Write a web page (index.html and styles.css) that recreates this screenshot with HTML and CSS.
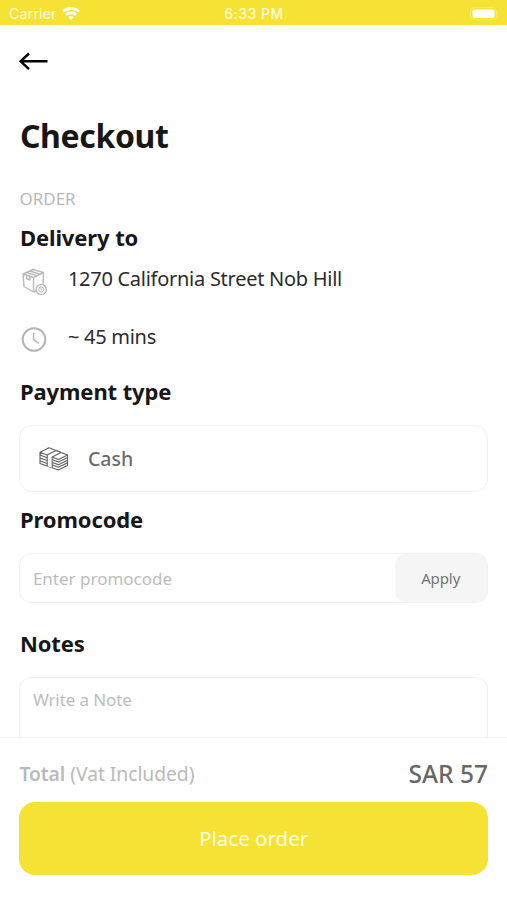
FILE: index.html
```html
<!DOCTYPE html>
<html lang="en">
<head>
<meta charset="utf-8">
<title>Checkout</title>
<link rel="stylesheet" href="styles.css">
</head>
<body>
<div class="screen">
  <div class="status">
    <div class="carrier"><span>Carrier</span>
      <svg class="wifi" width="18" height="14" viewBox="0 0 18 14" fill="none" stroke="#fffef0" stroke-width="2.8"><path d="M1 4.4Q9-2 17 4.4M4 7.9Q9 3.7 14 7.9"/><path d="M6.2 10.1Q9 8.1 11.8 10.1L9 12.9Z" fill="#fffef0" stroke="none"/></svg>
    </div>
    <span class="time">6:33 PM</span>
    <div class="power"><svg width="30" height="14" viewBox="0 0 30 14"><rect x="1.5" y=".5" width="26" height="12" rx="3.5" fill="none" stroke="#f9ea6c"/><rect x="3.5" y="2.4" width="22" height="8.5" rx="1.8" fill="#fff"/><path d="M28.5 5q1.5 1.6 0 3.2z" fill="#f9ea6c"/></svg></div>
  </div>
  <main class="content">
    <svg class="back" width="32" height="20" viewBox="0 0 32 20" fill="none" stroke="#000" stroke-width="2.4"><path d="M29.5 10.3H2M11 2.5L2.6 10.3L11 18.1"/></svg>
    <h1>Checkout</h1>
    <p class="label">ORDER</p>
    <h2 class="delivery">Delivery to</h2>
    <div class="info">
      <svg width="28" height="28" viewBox="0 0 28 28" fill="none" stroke="#bababa" stroke-width="1.4" stroke-linejoin="round"><path d="M3 6L13 1.5L23.5 4.5L13.5 9.5ZM3 6L4 18.5L13.5 24L23 19.5L23.5 4.5M13.5 9.5V24M6.5 4.5L17 7.7M9.7 3L20.2 6.1M6.5 7.5V10.5L10 12V8.5"/><circle cx="21.2" cy="21.5" r="5.1" fill="#fff"/><circle cx="21.2" cy="21.5" r="2.6" stroke-width="1"/><path d="M21.2 20v3" stroke-width="1"/></svg>
      <span class="address">1270 California Street Nob Hill</span>
    </div>
    <div class="info eta">
      <svg width="28" height="28" viewBox="0 0 28 28" fill="none" stroke="#b5b5b5"><circle cx="14" cy="13.5" r="11.3" stroke-width="2"/><path d="M13.6 7V13.5L19 17.5" stroke-width="1.5"/></svg>
      <span>~ 45 mins</span>
    </div>
    <h2 class="payment">Payment type</h2>
    <div class="card">
      <svg width="30" height="26" viewBox="0 0 30 26" fill="none" stroke="#606060" stroke-width="1.1" stroke-linejoin="round"><path d="M1 6.3L10 1.8L28.5 9V19.5L19.5 24L1 17.5ZM1 6.3L8 9M13.5 11.2L19.5 13.5L28.5 9M1 9.1L8 11.8M1 11.9L8 14.6M1 14.7L8 17.4M13.5 13.8L19.5 16.1L28.5 11.6M13.5 16.4L19.5 18.7L28.5 14.2M13.5 19L19.5 21.3L28.5 16.8"/><path d="M8.2 20V9L17 4.5L22 6.5L13.2 11V22" fill="#fff"/></svg>
      <span>Cash</span>
    </div>
    <h2 class="promo">Promocode</h2>
    <div class="field"><span class="hint">Enter promocode</span><div class="apply">Apply</div></div>
    <h2 class="notes">Notes</h2>
    <div class="note">Write a Note</div>
  </main>
  <footer>
    <div class="total"><span class="caption"><b>Total</b> (Vat Included)</span><span class="sum">SAR 57</span></div>
    <div class="place">Place order</div>
  </footer>
</div>
</body>
</html>
```
FILE: styles.css
```css
* { box-sizing: border-box; }
body { margin: 0; background: #fff; font-family: "Noto Sans", sans-serif; color: #171717; }
h1, h2, p { margin: 0; }
svg { display: block; flex: none; }
.screen { width: 507px; height: 900px; display: flex; flex-direction: column; overflow: hidden; }
.status { flex: none; height: 25px; padding: 2px 8px 0 9px; background: #f6e235; color: #fffbd8; display: grid; grid-template-columns: 1fr auto 1fr; align-items: center; font: 14.5px/22px Inter, sans-serif; }
.carrier { display: flex; align-items: center; gap: 5px; }
.time { font-weight: 500; font-size: 14px; letter-spacing: .5px; }
.power { display: flex; justify-content: flex-end; }
.content { flex: 1; min-height: 0; overflow: hidden; padding: 26px 18.6px 0 19.4px; }
.back { margin-left: -1.4px; }
h1 { margin: 43px 0 0 .5px; font-size: 32px; line-height: 44px; font-weight: 700; letter-spacing: -.35px; }
.label { margin-top: 29px; font-size: 17px; line-height: 24px; color: #b9b9b9; }
h2 { padding-left: .5px; font-size: 22px; line-height: 30px; font-weight: 700; letter-spacing: -.1px; }
.delivery { margin-top: 11px; }
.info { display: flex; align-items: center; gap: 20px; height: 30px; margin: 15px 0 0 .5px; font-size: 20px; color: #2b2b2b; }
.info span { line-height: 30px; margin-top: -6px; letter-spacing: -.27px; }
.eta { margin-top: 28px; }
.payment { margin-top: 21px; }
.card { height: 67px; margin-top: 19px; padding-left: 19px; display: flex; align-items: center; gap: 18.5px; border: 1px solid #f1f1f1; border-radius: 13px; font-size: 19.5px; font-weight: 500; color: #6c6c6c; }
.promo { margin-top: 12px; }
.field { height: 50px; margin-top: 19px; display: flex; border: 1px solid #f1f1f1; border-radius: 12px; overflow: hidden; font-size: 17px; line-height: 49px; color: #bcbcbc; }
.hint { flex: 1; padding-left: 12.5px; }
.apply { width: 92px; padding-right: 1.5px; border-radius: 10px; background: #f5f5f5; color: #757575; text-align: center; font-size: 15px; letter-spacing: -.1px; }
.notes { margin-top: 25px; }
.note { height: 120px; margin-top: 19px; padding: 10px 12.5px; border: 1px solid #f1f1f1; border-radius: 12px; font-size: 17px; line-height: 24px; letter-spacing: -.1px; color: #bcbcbc; }
footer { flex: none; height: 163px; padding: 17px 19px 0 19.4px; border-top: 1px solid #f1f1f1; background: #fff; }
.total { height: 38px; display: flex; justify-content: space-between; align-items: center; }
.caption { margin-top: -1px; font-size: 19.3px; letter-spacing: -.04px; color: #bababa; }
.caption b { font-weight: 600; }
.sum { margin-top: -1px; font-size: 24.5px; font-weight: 500; color: #676767; }
.place { height: 73px; margin-top: 9px; border-radius: 16px; background: #f6e235; color: #fffce0; text-align: center; font-size: 20.5px; line-height: 73px; }
```
